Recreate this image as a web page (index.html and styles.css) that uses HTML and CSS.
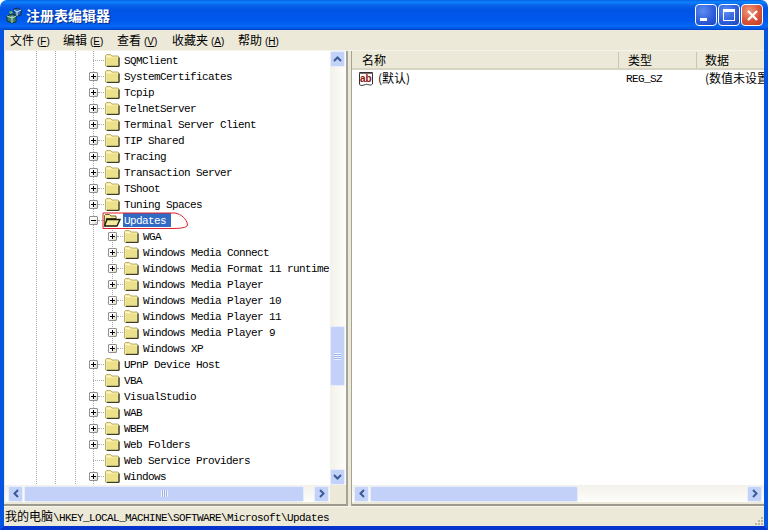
FILE: index.html
```html
<!DOCTYPE html>
<html lang="zh">
<head>
<meta charset="utf-8">
<title>注册表编辑器</title>
<link rel="stylesheet" href="styles.css">
</head>
<body>
<svg class="defs" width="0" height="0" aria-hidden="true">
  <symbol id="folder" viewBox="0 0 16 14">
    <path d="M1.500 13V2.500L2.500 1.500H6.500L8 3H14L15 4V13L14 13.500H2Z" fill="#f3ea9c" stroke="#b8ae74"/>
    <path d="M3 5H13.500V12H3Z" fill="#ece08a"/>
    <path d="M15 4.500V13L14 13.500H3" fill="none" stroke="#3f3b20" stroke-width="1.300"/>
    <path d="M2.500 3.500H7" stroke="#fff8cf" fill="none"/>
  </symbol>
  <symbol id="folder-open" viewBox="0 0 18 14">
    <path d="M1.500 12.500V2.500L2.500 1.500H6.500L8 3H13V6" fill="#f3ea9c" stroke="#6b6534"/>
    <path d="M3 5H13V7H4L2.500 11Z" fill="#4a4626"/>
    <path d="M1.500 13L4 6.500H17L14 13Z" fill="#f3ea9c" stroke="#1f1d0e" stroke-width="1.300"/>
  </symbol>
  <symbol id="up" viewBox="0 0 9 6"><path d="M1 5L4.500 1.500L8 5" fill="none" stroke="#3a5a98" stroke-width="2"/></symbol>
  <symbol id="down" viewBox="0 0 9 6"><path d="M1 1L4.500 4.500L8 1" fill="none" stroke="#3a5a98" stroke-width="2"/></symbol>
  <symbol id="left" viewBox="0 0 6 9"><path d="M5 1L1.500 4.500L5 8" fill="none" stroke="#3a5a98" stroke-width="2"/></symbol>
  <symbol id="right" viewBox="0 0 6 9"><path d="M1 1L4.500 4.500L1 8" fill="none" stroke="#3a5a98" stroke-width="2"/></symbol>
</svg>

<div class="window">
  <header class="titlebar">
    <svg class="app-icon" width="17" height="17" viewBox="0 0 17 17">
      <path d="M1 9L6 7L10 9V15L6 16L1 14Z" fill="#3f7f6a" stroke="#12352c"/>
      <path d="M6 9V16M1 9L6 11L10 9" fill="none" stroke="#bfe0d0"/>
      <path d="M8 2L12 1L15 3V8L11 9L8 7Z" fill="#2f6bb0" stroke="#0f2a4a"/>
      <path d="M8 3L11 5L15 3M11 5V9" fill="none" stroke="#d8e8f8"/>
      <path d="M3 5L6 4L7 6L4 7Z" fill="#63c15a"/>
    </svg>
    <span class="title-text">注册表编辑器</span>
    <div class="caption">
      <button class="cap cap-min" aria-label="最小化"><span class="min-bar"></span></button>
      <button class="cap cap-max" aria-label="最大化"><span class="max-box"></span></button>
      <button class="cap cap-close" aria-label="关闭">
        <svg width="13" height="13" viewBox="0 0 13 13"><path d="M2 2L11 11M11 2L2 11" stroke="#fff" stroke-width="2.400"/></svg>
      </button>
    </div>
  </header>

  <div class="client">
    <nav class="menubar">
      <span class="menu m1">文件<i>(<u>F</u>)</i></span>
      <span class="menu m2">编辑<i>(<u>E</u>)</i></span>
      <span class="menu m3">查看<i>(<u>V</u>)</i></span>
      <span class="menu m4">收藏夹<i>(<u>A</u>)</i></span>
      <span class="menu m5">帮助<i>(<u>H</u>)</i></span>
    </nav>

    <main class="panes">
      <section class="pane pane-left">
        <div class="pane-top">
          <div class="tree">
            <div class="row"><span class="stub"></span><svg class="fld"><use href="#folder"/></svg><span class="label">SQMClient</span></div>
            <div class="row"><span class="exp plus"></span><span class="tick"></span><svg class="fld"><use href="#folder"/></svg><span class="label">SystemCertificates</span></div>
            <div class="row"><span class="exp plus"></span><span class="tick"></span><svg class="fld"><use href="#folder"/></svg><span class="label">Tcpip</span></div>
            <div class="row"><span class="exp plus"></span><span class="tick"></span><svg class="fld"><use href="#folder"/></svg><span class="label">TelnetServer</span></div>
            <div class="row"><span class="exp plus"></span><span class="tick"></span><svg class="fld"><use href="#folder"/></svg><span class="label">Terminal Server Client</span></div>
            <div class="row"><span class="exp plus"></span><span class="tick"></span><svg class="fld"><use href="#folder"/></svg><span class="label">TIP Shared</span></div>
            <div class="row"><span class="exp plus"></span><span class="tick"></span><svg class="fld"><use href="#folder"/></svg><span class="label">Tracing</span></div>
            <div class="row"><span class="exp plus"></span><span class="tick"></span><svg class="fld"><use href="#folder"/></svg><span class="label">Transaction Server</span></div>
            <div class="row"><span class="exp plus"></span><span class="tick"></span><svg class="fld"><use href="#folder"/></svg><span class="label">TShoot</span></div>
            <div class="row"><span class="exp plus"></span><span class="tick"></span><svg class="fld"><use href="#folder"/></svg><span class="label">Tuning Spaces</span></div>
            <div class="row row-open">
              <span class="exp"></span><span class="tick"></span><svg class="fld fld-open"><use href="#folder-open"/></svg><span class="label selected">Updates</span>
              <svg class="scribble" width="90" height="20" viewBox="0 0 90 20"><path d="M2 2V17.500H70C78 17.500 86 17 86.500 14C86 8 80 3 74 2Z" fill="none" stroke="#e0202a" stroke-width="1"/></svg>
            </div>
            <div class="kids">
              <div class="row row-kid"><span class="exp plus"></span><span class="tick"></span><svg class="fld"><use href="#folder"/></svg><span class="label">WGA</span></div>
              <div class="row row-kid"><span class="exp plus"></span><span class="tick"></span><svg class="fld"><use href="#folder"/></svg><span class="label">Windows Media Connect</span></div>
              <div class="row row-kid"><span class="exp plus"></span><span class="tick"></span><svg class="fld"><use href="#folder"/></svg><span class="label">Windows Media Format 11 runtime</span></div>
              <div class="row row-kid"><span class="exp plus"></span><span class="tick"></span><svg class="fld"><use href="#folder"/></svg><span class="label">Windows Media Player</span></div>
              <div class="row row-kid"><span class="exp plus"></span><span class="tick"></span><svg class="fld"><use href="#folder"/></svg><span class="label">Windows Media Player 10</span></div>
              <div class="row row-kid"><span class="exp plus"></span><span class="tick"></span><svg class="fld"><use href="#folder"/></svg><span class="label">Windows Media Player 11</span></div>
              <div class="row row-kid"><span class="exp plus"></span><span class="tick"></span><svg class="fld"><use href="#folder"/></svg><span class="label">Windows Media Player 9</span></div>
              <div class="row row-kid"><span class="exp plus"></span><span class="tick"></span><svg class="fld"><use href="#folder"/></svg><span class="label">Windows XP</span></div>
            </div>
            <div class="row"><span class="exp plus"></span><span class="tick"></span><svg class="fld"><use href="#folder"/></svg><span class="label">UPnP Device Host</span></div>
            <div class="row"><span class="stub"></span><svg class="fld"><use href="#folder"/></svg><span class="label">VBA</span></div>
            <div class="row"><span class="exp plus"></span><span class="tick"></span><svg class="fld"><use href="#folder"/></svg><span class="label">VisualStudio</span></div>
            <div class="row"><span class="exp plus"></span><span class="tick"></span><svg class="fld"><use href="#folder"/></svg><span class="label">WAB</span></div>
            <div class="row"><span class="exp plus"></span><span class="tick"></span><svg class="fld"><use href="#folder"/></svg><span class="label">WBEM</span></div>
            <div class="row"><span class="exp plus"></span><span class="tick"></span><svg class="fld"><use href="#folder"/></svg><span class="label">Web Folders</span></div>
            <div class="row"><span class="stub"></span><svg class="fld"><use href="#folder"/></svg><span class="label">Web Service Providers</span></div>
            <div class="row"><span class="exp plus"></span><span class="tick"></span><svg class="fld"><use href="#folder"/></svg><span class="label">Windows</span></div>
          </div>
          <div class="vscroll">
            <span class="sb-btn"><svg width="9" height="6"><use href="#up"/></svg></span>
            <div class="vtrack">
              <span class="vthumb"><span class="grip-v"></span></span>
            </div>
            <span class="sb-btn"><svg width="9" height="6"><use href="#down"/></svg></span>
          </div>
        </div>
        <div class="hscroll hscroll-left">
          <span class="sb-btn"><svg width="6" height="9"><use href="#left"/></svg></span>
          <div class="htrack"><span class="hthumb hthumb-left"><span class="grip-h"></span></span></div>
          <span class="sb-btn"><svg width="6" height="9"><use href="#right"/></svg></span>
        </div>
      </section>

      <section class="pane pane-right">
        <div class="list">
          <div class="list-head">
            <span class="col col-name">名称</span>
            <span class="col col-type">类型</span>
            <span class="col col-data">数据</span>
          </div>
          <div class="list-row">
            <span class="cell-name">
              <svg class="ab-icon" width="16" height="16" viewBox="0 0 16 16">
                <path d="M1.500 1.500H14.500V13C12 15.500 10 12.500 7.500 13.500C5 14.500 3 15 1.500 13.500Z" fill="#fff" stroke="#303030"/>
                <path d="M1.500 2.500H14.500" stroke="#8a6a6a"/>
                <text x="2" y="11" class="ab-text">ab</text>
              </svg>
              <span class="default-name">(默认)</span>
            </span>
            <span class="cell-type">REG_SZ</span>
            <span class="cell-data">(数值未设置)</span>
          </div>
        </div>
        <div class="hscroll hscroll-right">
          <span class="sb-btn"><svg width="6" height="9"><use href="#left"/></svg></span>
          <div class="htrack"><span class="hthumb hthumb-right"></span></div>
          <span class="sb-btn"><svg width="6" height="9"><use href="#right"/></svg></span>
        </div>
      </section>
    </main>

    <footer class="status">
      <span class="path"><b>我的电脑</b>\HKEY_LOCAL_MACHINE\SOFTWARE\Microsoft\Updates</span>
      <svg class="size-grip" width="12" height="12" viewBox="0 0 12 12">
        <path d="M9 2h2v2H9zM6 5h2v2H6zM9 5h2v2H9zM3 8h2v2H3zM6 8h2v2H6zM9 8h2v2H9z" fill="#b8b5a4"/>
      </svg>
    </footer>
  </div>
</div>
</body>
</html>
```

FILE: styles.css
```css
* { box-sizing: border-box; }

html, body {
  margin: 0;
  padding: 0;
  background: #fff;
}

.defs { position: absolute; }

.window {
  width: 768px;
  height: 530px;
  display: flex;
  flex-direction: column;
  overflow: hidden;
  font-family: "Liberation Mono", "Noto Sans CJK SC", monospace;
  font-size: 10px;
  color: #000;
}

/* title bar */
.titlebar {
  flex: none;
  height: 30px;
  display: flex;
  align-items: center;
  padding: 0 5px 0 6px;
  border-radius: 7px 7px 0 0;
  background: linear-gradient(to bottom, #0a5ee0 0, #0a85ff 2px, #0a63ea 5px, #0054e3 10px, #0058ee 20px, #0468f6 26px, #0352de 29px, #003dc0 30px);
}

.app-icon { flex: none; }

.title-text {
  margin-left: 3px;
  font-family: "Noto Sans CJK SC", sans-serif;
  font-size: 14px;
  font-weight: 700;
  color: #fff;
  text-shadow: 1px 1px 1px #0b2a80;
}

.caption {
  margin-left: auto;
  display: flex;
  gap: 1px;
}

.cap {
  width: 22px;
  height: 22px;
  padding: 0;
  border: 1px solid #fff;
  border-radius: 4px;
  display: flex;
  align-items: center;
  justify-content: center;
  background: radial-gradient(circle at 35% 30%, #5f8cf0 0, #2f5fdc 55%, #1e43b8 100%);
}

.cap-close {
  background: radial-gradient(circle at 35% 30%, #ee9a7c 0, #d9553a 55%, #b93a22 100%);
}

.cap-min { align-items: flex-end; justify-content: flex-start; padding: 0 0 4px 4px; }
.min-bar { display: block; width: 7px; height: 3px; background: #fff; }

.max-box {
  display: block;
  width: 12px;
  height: 12px;
  border: 1px solid #fff;
  border-top-width: 3px;
}

/* client area */
.client {
  flex: 1;
  min-height: 0;
  display: flex;
  flex-direction: column;
  background: #ece9d8;
  border-style: solid;
  border-color: #0454e2;
  border-width: 0 4px 4px 4px;
  border-bottom-color: #0534cf;
}

.menubar {
  flex: none;
  height: 21px;
  display: flex;
  align-items: center;
  padding-left: 6px;
  padding-bottom: 1px;
  font-family: "Noto Sans CJK SC", sans-serif;
  font-size: 12px;
  border-bottom: 1px solid #f4f3ec;
}

.menu i {
  font-style: normal;
  font-family: "Liberation Sans", sans-serif;
  font-size: 10px;
  margin-left: 3px;
}

.m1 { width: 53px; }
.m2 { width: 54px; }
.m3 { width: 55px; }
.m4 { width: 66px; }
.m5 { width: 50px; }

.panes {
  flex: none;
  height: 455px;
  display: flex;
  justify-content: space-between;
}

.pane {
  display: flex;
  flex-direction: column;
  border-bottom: 2px solid #9c9a8c;
}

.pane-left { width: 344px; padding-left: 1px; border-right: 2px solid #a5a396; }
.pane-right { width: 413px; border-left: 1px solid #a5a396; }

.pane-top {
  flex: none;
  height: 434px;
  display: flex;
}

/* tree */
.tree {
  flex: none;
  width: 325px;
  height: 434px;
  padding-top: 1px;
  overflow: hidden;
  background-color: #fff;
  background-image:
    repeating-linear-gradient(to bottom, #a8a8a8 0 1px, transparent 1px 2px),
    repeating-linear-gradient(to bottom, #a8a8a8 0 1px, transparent 1px 2px),
    repeating-linear-gradient(to bottom, #a8a8a8 0 1px, transparent 1px 2px),
    repeating-linear-gradient(to bottom, #a8a8a8 0 1px, transparent 1px 2px);
  background-size: 1px 100%;
  background-repeat: no-repeat;
  background-position: 31px 0, 50px 0, 70px 0, 88px 0;
}

.row {
  position: relative;
  height: 16px;
  display: flex;
  align-items: center;
  padding-left: 84px;
  white-space: nowrap;
}

.row-kid { padding-left: 103px; }

.kids {
  background-image: repeating-linear-gradient(to bottom, #a8a8a8 0 1px, transparent 1px 2px);
  background-size: 1px calc(100% - 8px);
  background-repeat: no-repeat;
  background-position: 107px 0;
}

.exp {
  flex: none;
  width: 9px;
  height: 9px;
  border: 1px solid #8f8f8f;
  border-radius: 1px;
  background: linear-gradient(135deg, #fff 40%, #d8d4c4 100%);
  background-color: #fff;
  position: relative;
}

.exp::before {
  content: "";
  position: absolute;
  left: 1px;
  top: 3px;
  width: 5px;
  height: 1px;
  background: #000;
}

.plus::after {
  content: "";
  position: absolute;
  left: 3px;
  top: 1px;
  width: 1px;
  height: 5px;
  background: #000;
}

.tick {
  flex: none;
  width: 6px;
  border-top: 1px dotted #a8a8a8;
}

.stub {
  flex: none;
  width: 11px;
  margin-left: 4px;
  border-top: 1px dotted #a8a8a8;
}

.fld {
  flex: none;
  width: 16px;
  height: 14px;
  margin-right: 3px;
  margin-top: -1px;
}

.fld-open { width: 18px; margin-left: -1px; margin-right: 2px; }

.label {
  padding: 0 1px;
  height: 14px;
  line-height: 16px;
  font-size: 11px;
  letter-spacing: -0.600px;
}

.selected {
  padding-right: 5px;
  background: #316ac5;
  color: #fff;
}

.scribble {
  position: absolute;
  left: 96px;
  top: -1px;
}

/* scrollbars */
.vscroll {
  flex: none;
  width: 16px;
  display: flex;
  flex-direction: column;
  background: linear-gradient(to right, #f3f1ea, #fdfdfa);
}

.vtrack {
  flex: 1;
  position: relative;
}

.vthumb {
  position: absolute;
  left: 0;
  top: 259px;
  width: 15px;
  height: 60px;
  display: flex;
  align-items: center;
  justify-content: center;
  background: #c3d1f8;
  border: 1px solid #e6ecfb;
  border-radius: 2px;
}

.grip-v {
  display: block;
  width: 7px;
  height: 7px;
  background: repeating-linear-gradient(to bottom, #eef2fe 0 1px, #9fb4e8 1px 2px);
}

.grip-h {
  display: block;
  width: 7px;
  height: 7px;
  background: repeating-linear-gradient(to right, #eef2fe 0 1px, #9fb4e8 1px 2px);
}

.sb-btn {
  flex: none;
  width: 15px;
  height: 16px;
  display: flex;
  align-items: center;
  justify-content: center;
  background: #c3d2f8;
  border: 1px solid #e8eefc;
  border-radius: 2px;
}

.hscroll {
  flex: none;
  height: 17px;
  display: flex;
  align-items: center;
  background: linear-gradient(to bottom, #f3f1ea, #fdfdfa);
}

.hscroll-left {
  width: 325px;
  padding: 0 1px 0 3px;
}

.hscroll-right { padding: 0 2px; }

.htrack {
  flex: 1;
  height: 16px;
  display: flex;
}

.hthumb {
  display: flex;
  align-items: center;
  justify-content: center;
  height: 16px;
  background: #c3d1f8;
  border: 1px solid #e6ecfb;
  border-radius: 2px;
}

.hthumb-left { width: 280px; margin-left: 1px; }
.hthumb-right { width: 208px; margin-left: 1px; }

/* list */
.list {
  flex: none;
  height: 434px;
  background: #fff;
  overflow: hidden;
}

.list-head {
  height: 19px;
  padding-top: 1px;
  display: flex;
  background: #ece9d8;
  border-bottom: 2px solid #d8d4c2;
  font-family: "Noto Sans CJK SC", sans-serif;
  font-size: 12px;
  line-height: 16px;
}

.col { display: block; flex: none; }
.col-name { width: 267px; padding-left: 10px; border-right: 1px solid #c9c6b4; }
.col-type { width: 78px; padding-left: 9px; border-right: 1px solid #c9c6b4; }
.col-data { padding-left: 8px; }

.list-row {
  height: 16px;
  margin-top: 1px;
  display: flex;
  align-items: center;
  white-space: nowrap;
}

.cell-name {
  flex: none;
  width: 274px;
  padding-left: 6px;
  display: flex;
  align-items: center;
  gap: 4px;
  font-family: "Noto Sans CJK SC", sans-serif;
  font-size: 12px;
}

.default-name { line-height: 14px; height: 16px; }

.ab-text {
  font-family: "Liberation Sans", sans-serif;
  font-size: 10px;
  font-weight: 700;
  fill: #8c1010;
}

.cell-type {
  flex: none;
  width: 79px;
  font-size: 11px;
  letter-spacing: -0.600px;
}

.cell-data {
  font-family: "Noto Sans CJK SC", sans-serif;
  font-size: 12px;
  line-height: 14px;
  height: 16px;
}

/* status */
.status {
  flex: 1;
  display: flex;
  align-items: center;
  padding: 0 0 3px 1px;
  position: relative;
  border-top: 1px solid #f6f5ee;
}

.path {
  font-family: "Liberation Mono", monospace;
  font-size: 11px;
  letter-spacing: -0.600px;
}

.path b {
  font-family: "Noto Sans CJK SC", sans-serif;
  font-size: 12px;
  font-weight: 400;
  letter-spacing: 0;
}

.size-grip {
  position: absolute;
  right: 0;
  bottom: 0;
}
```
